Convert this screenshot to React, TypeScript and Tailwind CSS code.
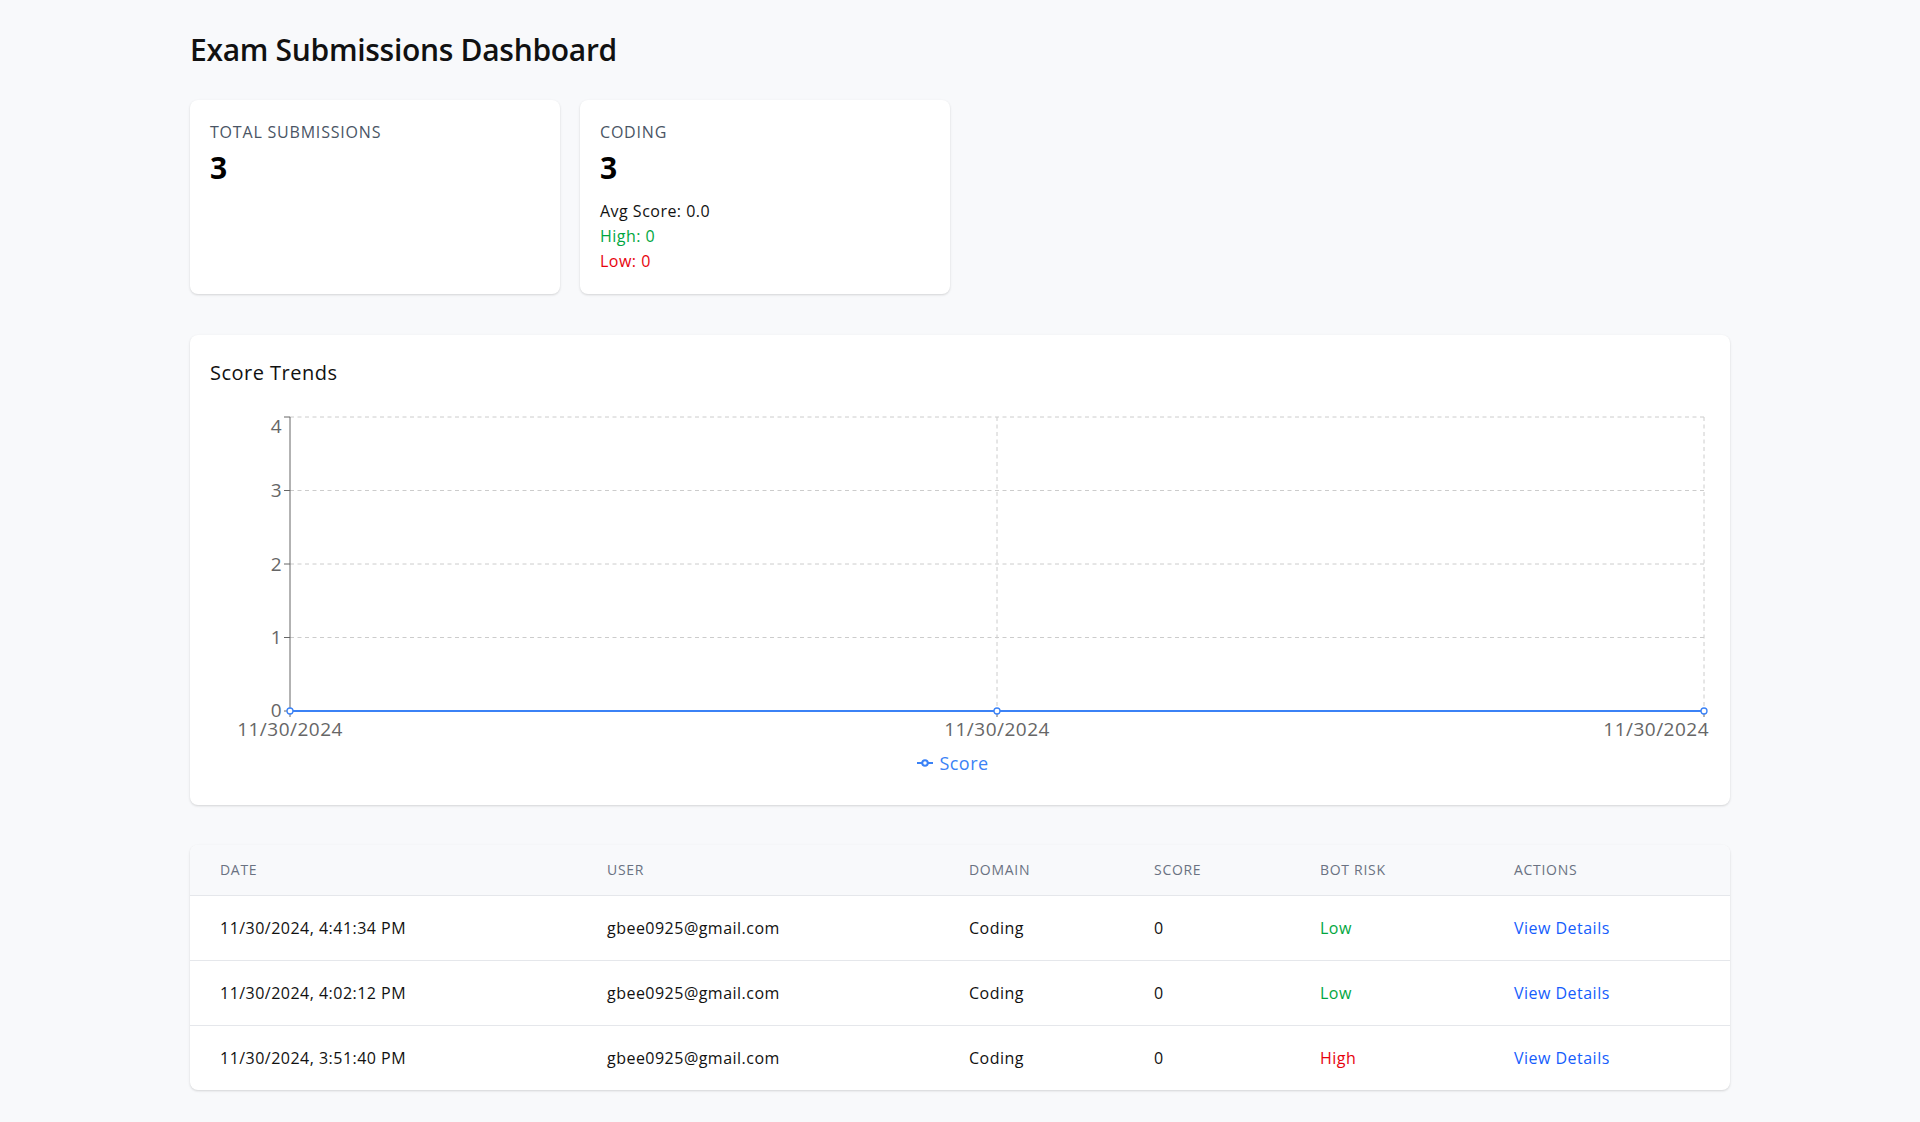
import React from 'react';

interface Submission {
    date: string;
    user: string;
    domain: string;
    score: number;
    botRisk: 'Low' | 'High';
}

const submissions: Submission[] = [
    { date: '11/30/2024, 4:41:34 PM', user: 'gbee0925@gmail.com', domain: 'Coding', score: 0, botRisk: 'Low' },
    { date: '11/30/2024, 4:02:12 PM', user: 'gbee0925@gmail.com', domain: 'Coding', score: 0, botRisk: 'Low' },
    { date: '11/30/2024, 3:51:40 PM', user: 'gbee0925@gmail.com', domain: 'Coding', score: 0, botRisk: 'High' },
];

// chart geometry, in svg coordinates
const X0 = 80;
const X1 = 1494;
const XM = 787;
const Y_TOP = 17;
const Y_ZERO = 311;
const yFor = (v: number) => Y_ZERO - (v / 4) * (Y_ZERO - Y_TOP);

const ScoreChart: React.FC = () => {
    const ticks = [0, 1, 2, 3, 4];
    const points = [X0, XM, X1];

    return (
        <svg width="1500" height="345" viewBox="0 0 1500 345" className="block">
            {/* grid */}
            {ticks.slice(1).map(t => (
                <line key={t} x1={X0} x2={X1} y1={yFor(t)} y2={yFor(t)} stroke="#cccccc" strokeDasharray="4 3.5" />
            ))}
            {[XM, X1].map(x => (
                <line key={x} x1={x} x2={x} y1={Y_TOP} y2={Y_ZERO} stroke="#cccccc" strokeDasharray="4 3.5" />
            ))}

            {/* y axis */}
            <line x1={X0} x2={X0} y1={Y_TOP} y2={Y_ZERO} stroke="#666666" />
            {ticks.map(t => (
                <g key={t}>
                    <line x1={X0 - 6} x2={X0} y1={yFor(t)} y2={yFor(t)} stroke="#666666" />
                    <text
                        x={X0 - 8}
                        y={t === 4 ? yFor(t) + 9 : t === 0 ? yFor(t) - 1 : yFor(t)}
                        dy="0.355em"
                        textAnchor="end"
                        fill="#666666"
                        fontSize="19"
                    >
                        {t}
                    </text>
                </g>
            ))}

            {/* x axis */}
            <line x1={X0} x2={X1} y1={Y_ZERO} y2={Y_ZERO} stroke="#666666" />
            {points.map(x => (
                <line key={x} x1={x} x2={x} y1={Y_ZERO} y2={Y_ZERO + 6} stroke="#666666" />
            ))}
            <text x={X0} y={Y_ZERO + 25} textAnchor="middle" fill="#666666" fontSize="19">11/30/2024</text>
            <text x={XM} y={Y_ZERO + 25} textAnchor="middle" fill="#666666" fontSize="19">11/30/2024</text>
            <text x={X1 + 5} y={Y_ZERO + 25} textAnchor="end" fill="#666666" fontSize="19">11/30/2024</text>

            {/* data */}
            <line x1={X0} x2={X1} y1={Y_ZERO} y2={Y_ZERO} stroke="#3b82f6" strokeWidth="2" />
            {points.map(x => (
                <circle key={x} cx={x} cy={Y_ZERO} r="3" fill="#ffffff" stroke="#3b82f6" strokeWidth="1.3" />
            ))}
        </svg>
    );
};

const StatCard: React.FC<{ label: string; value: number; children?: React.ReactNode }> = ({ label, value, children }) => (
    <div className="rounded-lg bg-white p-5 shadow-[0_1px_3px_rgba(0,0,0,0.1),0_1px_2px_rgba(0,0,0,0.06)]">
        <div className="text-base leading-6 tracking-[0.05em] text-gray-600">{label}</div>
        <div className="mt-[6px] text-3xl font-bold leading-9 text-black">{value}</div>
        {children}
    </div>
);

export default function App() {
    return (
        <div className="min-h-screen bg-[#f8f9fb] p-8 font-['Open_Sans','Noto_Sans',sans-serif] tracking-[0.03em] text-black">
            <div className="mx-auto w-[1540px]">
                <h1 className="mb-8 text-3xl font-semibold leading-9 tracking-[-0.01em] text-[#111111]">Exam Submissions Dashboard</h1>

                <div className="mb-[41px] grid grid-cols-4 gap-5">
                    <StatCard label="TOTAL SUBMISSIONS" value={3} />
                    <StatCard label="CODING" value={3}>
                        <div className="mt-[13px] text-base leading-[25px]">
                            <div className="text-[#111111]">Avg Score: 0.0</div>
                            <div className="text-green-600">High: 0</div>
                            <div className="text-red-600">Low: 0</div>
                        </div>
                    </StatCard>
                </div>

                <div className="mb-10 rounded-lg bg-white p-5 shadow-[0_1px_3px_rgba(0,0,0,0.1),0_1px_2px_rgba(0,0,0,0.06)]">
                    <h2 className="mb-[13px] pt-1 text-xl leading-7 font-medium text-[#111111]">Score Trends</h2>
                    <div className="flex h-[385px] flex-col">
                        <ScoreChart />
                        <div className="mt-[6px] flex items-center justify-center pr-[14px] text-lg leading-6 text-[#3b82f6]">
                            <svg width="16" height="16" viewBox="0 0 32 32" className="mr-[6px]">
                                <line x1="0" y1="16" x2="32" y2="16" stroke="#3b82f6" strokeWidth="4" />
                                <circle cx="16" cy="16" r="5.5" fill="#ffffff" stroke="#3b82f6" strokeWidth="4" />
                            </svg>
                            <span>Score</span>
                        </div>
                    </div>
                </div>

                <div className="overflow-hidden rounded-lg bg-white shadow-[0_1px_3px_rgba(0,0,0,0.1),0_1px_2px_rgba(0,0,0,0.06)]">
                    <table className="w-full table-fixed border-collapse text-left">
                        <thead className="bg-[#f8f9fb]">
                            <tr className="border-b border-gray-200">
                                <th className="w-[387px] px-[30px] py-[13px] text-sm leading-6 font-normal uppercase tracking-wider text-gray-500">Date</th>
                                <th className="w-[362px] px-[30px] py-[13px] text-sm leading-6 font-normal uppercase tracking-wider text-gray-500">User</th>
                                <th className="w-[185px] px-[30px] py-[13px] text-sm leading-6 font-normal uppercase tracking-wider text-gray-500">Domain</th>
                                <th className="w-[166px] px-[30px] py-[13px] text-sm leading-6 font-normal uppercase tracking-wider text-gray-500">Score</th>
                                <th className="w-[194px] px-[30px] py-[13px] text-sm leading-6 font-normal uppercase tracking-wider text-gray-500">Bot Risk</th>
                                <th className="px-[30px] py-[13px] text-sm leading-6 font-normal uppercase tracking-wider text-gray-500">Actions</th>
                            </tr>
                        </thead>
                        <tbody>
                            {submissions.map((row, index) => (
                                <tr key={row.date} className={index < submissions.length - 1 ? 'border-b border-gray-200' : ''}>
                                    <td className="px-[30px] py-5 text-base leading-6 text-[#111111]">{row.date}</td>
                                    <td className="px-[30px] py-5 text-base leading-6 text-[#111111]">{row.user}</td>
                                    <td className="px-[30px] py-5 text-base leading-6 text-[#111111]">{row.domain}</td>
                                    <td className="px-[30px] py-5 text-base leading-6 text-[#111111]">{row.score}</td>
                                    <td className={`px-[30px] py-5 text-base leading-6 ${row.botRisk === 'High' ? 'text-red-600' : 'text-green-600'}`}>
                                        {row.botRisk}
                                    </td>
                                    <td className="px-[30px] py-5 text-base leading-6">
                                        <a href="#" className="text-blue-600 hover:underline">View Details</a>
                                    </td>
                                </tr>
                            ))}
                        </tbody>
                    </table>
                </div>
            </div>
        </div>
    );
}
